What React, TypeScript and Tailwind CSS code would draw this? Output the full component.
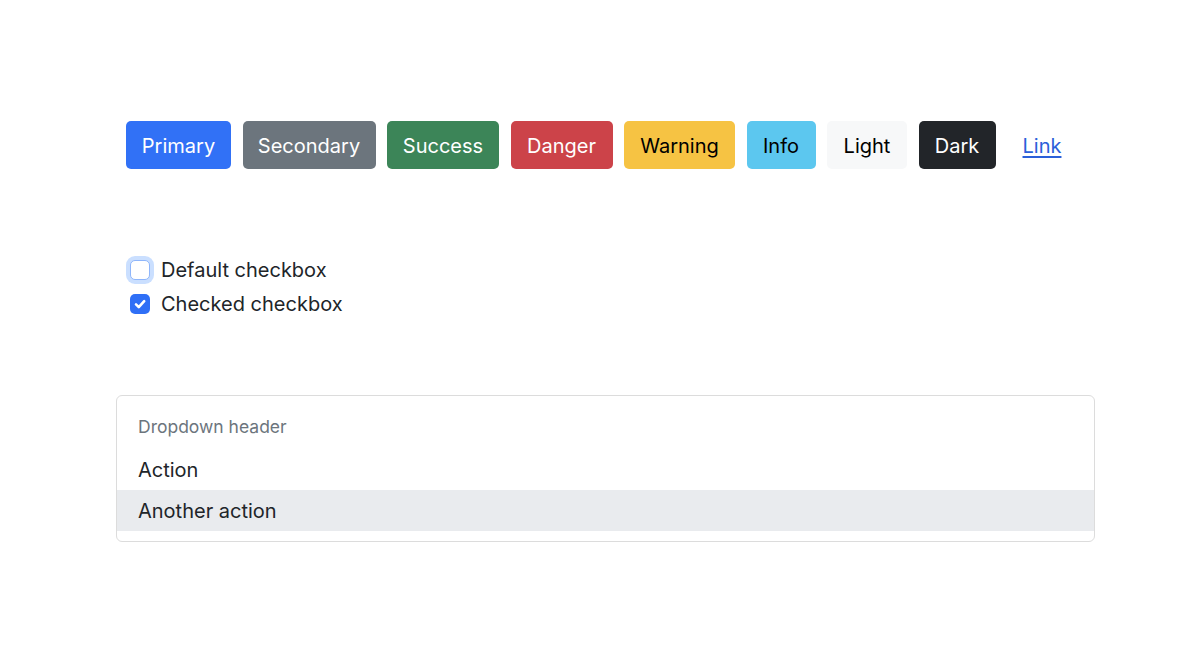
const buttons = [
  { label: 'Primary', w: 'w-[105px]', cls: 'bg-[#3171f6] text-white' },
  { label: 'Secondary', w: 'w-[133px]', cls: 'bg-[#6c757d] text-white' },
  { label: 'Success', w: 'w-[112px]', cls: 'bg-[#3c8558] text-white' },
  { label: 'Danger', w: 'w-[102px]', cls: 'bg-[#cc4349] text-white' },
  { label: 'Warning', w: 'w-[111px]', cls: 'bg-[#f6c343] text-black' },
  { label: 'Info', w: 'w-[69px]', cls: 'bg-[#5cc7ef] text-black' },
  { label: 'Light', w: 'w-[80px]', cls: 'bg-[#f7f8f9] text-black' },
  { label: 'Dark', w: 'w-[77px]', cls: 'bg-[#222529] text-white' },
];

export default function App() {
  return (
    <div
      className="h-[671px] w-[1200px] bg-white pt-[121px] pl-[116px] text-[#212529]"
      style={{ fontFamily: 'Inter, "Liberation Sans", sans-serif' }}
    >
      <div className="ml-[10px] flex gap-[11.5px]">
        {buttons.map((b) => (
          <button
            key={b.label}
            className={`${b.w} ${b.cls} flex h-[48px] items-center justify-center rounded-[5px] pt-[1px] text-[20px]`}
          >
            {b.label}
          </button>
        ))}
        <button className="ml-[3px] flex h-[48px] w-[64px] items-center justify-center pt-[1px] text-[20px] text-[#2b60d9] underline underline-offset-[3px]">
          Link
        </button>
      </div>

      <div className="mt-[84px] ml-[14px] flex flex-col">
        <label className="flex h-[34px] items-center gap-[11px] text-[20px]">
          <span className="h-[20px] w-[20px] rounded-[5px] border border-[#8fb6fb] bg-white shadow-[0_0_0_4px_rgba(13,110,253,0.22)]" />
          Default checkbox
        </label>
        <label className="flex h-[34px] items-center gap-[11px] text-[20px]">
          <span className="flex h-[20px] w-[20px] items-center justify-center rounded-[5px] bg-[#2f6ff6]">
            <svg viewBox="0 0 20 20" className="h-[20px] w-[20px]">
              <path d="M6 10.3l2.8 2.8L14.2 7.2" fill="none" stroke="white" strokeWidth="2.6" strokeLinecap="round" strokeLinejoin="round" />
            </svg>
          </span>
          Checked checkbox
        </label>
      </div>

      <div className="mt-[74px] w-[979px] rounded-[6px] border border-[#dcdcdc] py-[10px]">
        <div className="flex h-[43px] items-center px-[21px] text-[17.5px] text-[#6c757d]">Dropdown header</div>
        <div className="flex h-[41px] items-center px-[21px] text-[20px]">Action</div>
        <div className="flex h-[41px] items-center bg-[#e9ebee] px-[21px] text-[20px]">Another action</div>
      </div>
    </div>
  );
}
